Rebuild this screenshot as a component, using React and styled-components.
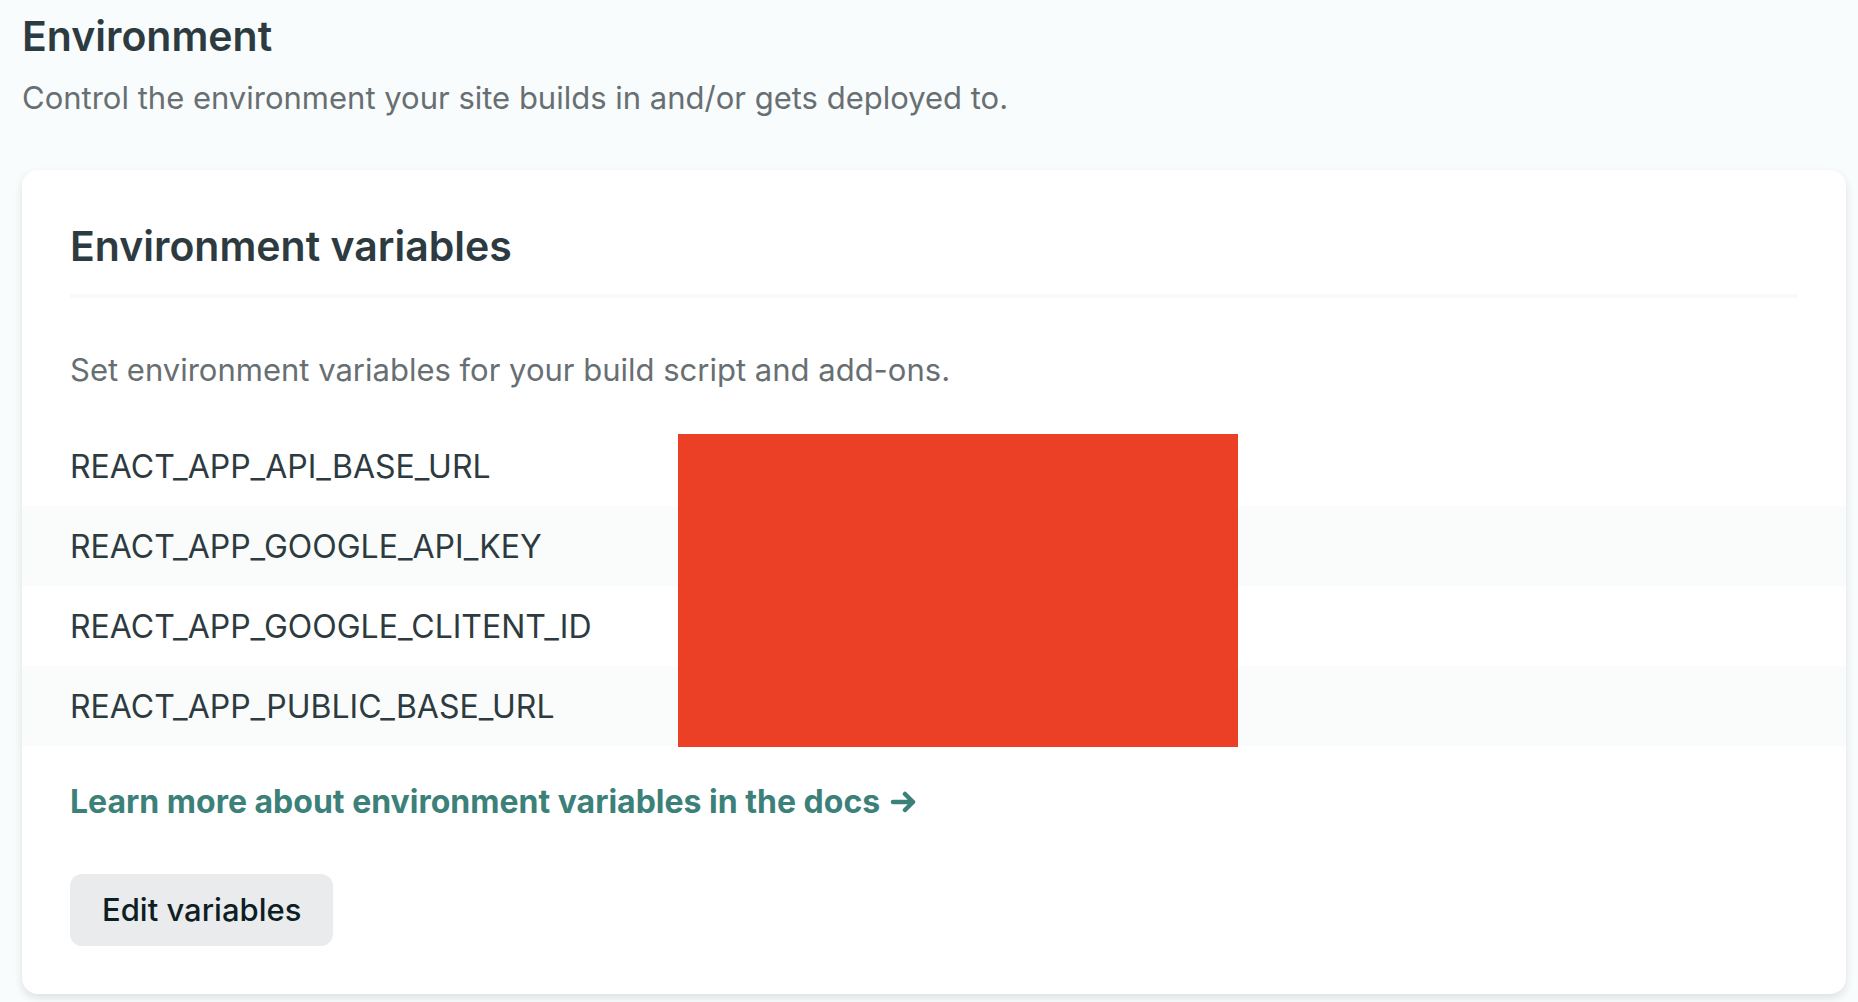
import React from "react";
import styled, { createGlobalStyle } from "styled-components";

const GlobalStyle = createGlobalStyle`
  *, *::before, *::after { box-sizing: border-box; }
  body {
    margin: 0;
    background: #f9fcfd;
    color: #2d3b41;
    font-family: Inter, "Noto Sans", sans-serif;
    font-size: 32px;
    line-height: 48px;
  }
`;

const Page = styled.main`
  padding: 8px 12px 8px 22px;
`;

const Title = styled.h1`
  margin: 0;
  font-size: 41px;
  font-weight: 600;
  line-height: 56px;
`;

const SectionHeader = styled.header`
  display: flex;
  flex-direction: column;
  gap: 10px;
  margin-bottom: 48px;
`;

const Text = styled.p`
  margin: 0;
  color: #686f73;
  font-size: 31px;
`;

const Card = styled.section`
  padding: 48px 0;
  border-radius: 16px;
  background: #fff;
  box-shadow: 0 4px 8px rgba(14, 30, 37, 0.12);
`;

const CardBody = styled.div`
  display: flex;
  flex-direction: column;
  align-items: flex-start;
  gap: 48px;
  padding: 0 48px;
`;

const CardTitle = styled(Title)`
  align-self: stretch;
  padding-bottom: 20px;
  border-bottom: 4px solid #f9fbfa;
`;

const Variables = styled.div`
  position: relative;
  margin: 32px 0;
`;

const Table = styled.table`
  width: 100%;
  border-collapse: collapse;
`;

const Row = styled.tr`
  &:nth-child(even) {
    background: #fafcfb;
  }
`;

const Name = styled.th`
  padding: 17px 48px 15px;
  font-weight: 400;
  text-align: left;
`;

const Redaction = styled.div`
  position: absolute;
  top: 8px;
  left: 656px;
  width: 560px;
  height: 313px;
  background: #eb4026;
`;

const DocsLink = styled.a`
  display: inline-flex;
  align-items: center;
  gap: 10px;
  color: #3c8179;
  font-weight: 700;
  text-decoration: none;
`;

const Arrow = styled.svg`
  width: 26px;
  height: 22px;
  fill: none;
  stroke: currentColor;
  stroke-width: 4.5;
  stroke-linecap: round;
  stroke-linejoin: round;
`;

const Button = styled.button`
  padding: 12px 32px;
  border: 0;
  border-radius: 12px;
  background: #e9ebec;
  color: #0e1e25;
  font: inherit;
  font-size: 31px;
  font-weight: 500;
  cursor: pointer;
`;

const names = [
  "REACT_APP_API_BASE_URL",
  "REACT_APP_GOOGLE_API_KEY",
  "REACT_APP_GOOGLE_CLITENT_ID",
  "REACT_APP_PUBLIC_BASE_URL",
];

export default function App() {
  return (
    <>
      <GlobalStyle />
      <Page>
        <SectionHeader>
          <Title>Environment</Title>
          <Text>Control the environment your site builds in and/or gets deployed to.</Text>
        </SectionHeader>
        <Card>
          <CardBody>
            <CardTitle as="h2">Environment variables</CardTitle>
            <Text>Set environment variables for your build script and add-ons.</Text>
          </CardBody>
          <Variables>
            <Table>
              <tbody>
                {names.map((name) => (
                  <Row key={name}>
                    <Name scope="row">{name}</Name>
                    <td />
                  </Row>
                ))}
              </tbody>
            </Table>
            <Redaction />
          </Variables>
          <CardBody>
            <DocsLink href="#docs">
              Learn more about environment variables in the docs
              <Arrow viewBox="0 0 26 22" aria-hidden="true">
                <path d="M3 11H23M15 3L23 11L15 19" />
              </Arrow>
            </DocsLink>
            <Button type="button">Edit variables</Button>
          </CardBody>
        </Card>
      </Page>
    </>
  );
}
